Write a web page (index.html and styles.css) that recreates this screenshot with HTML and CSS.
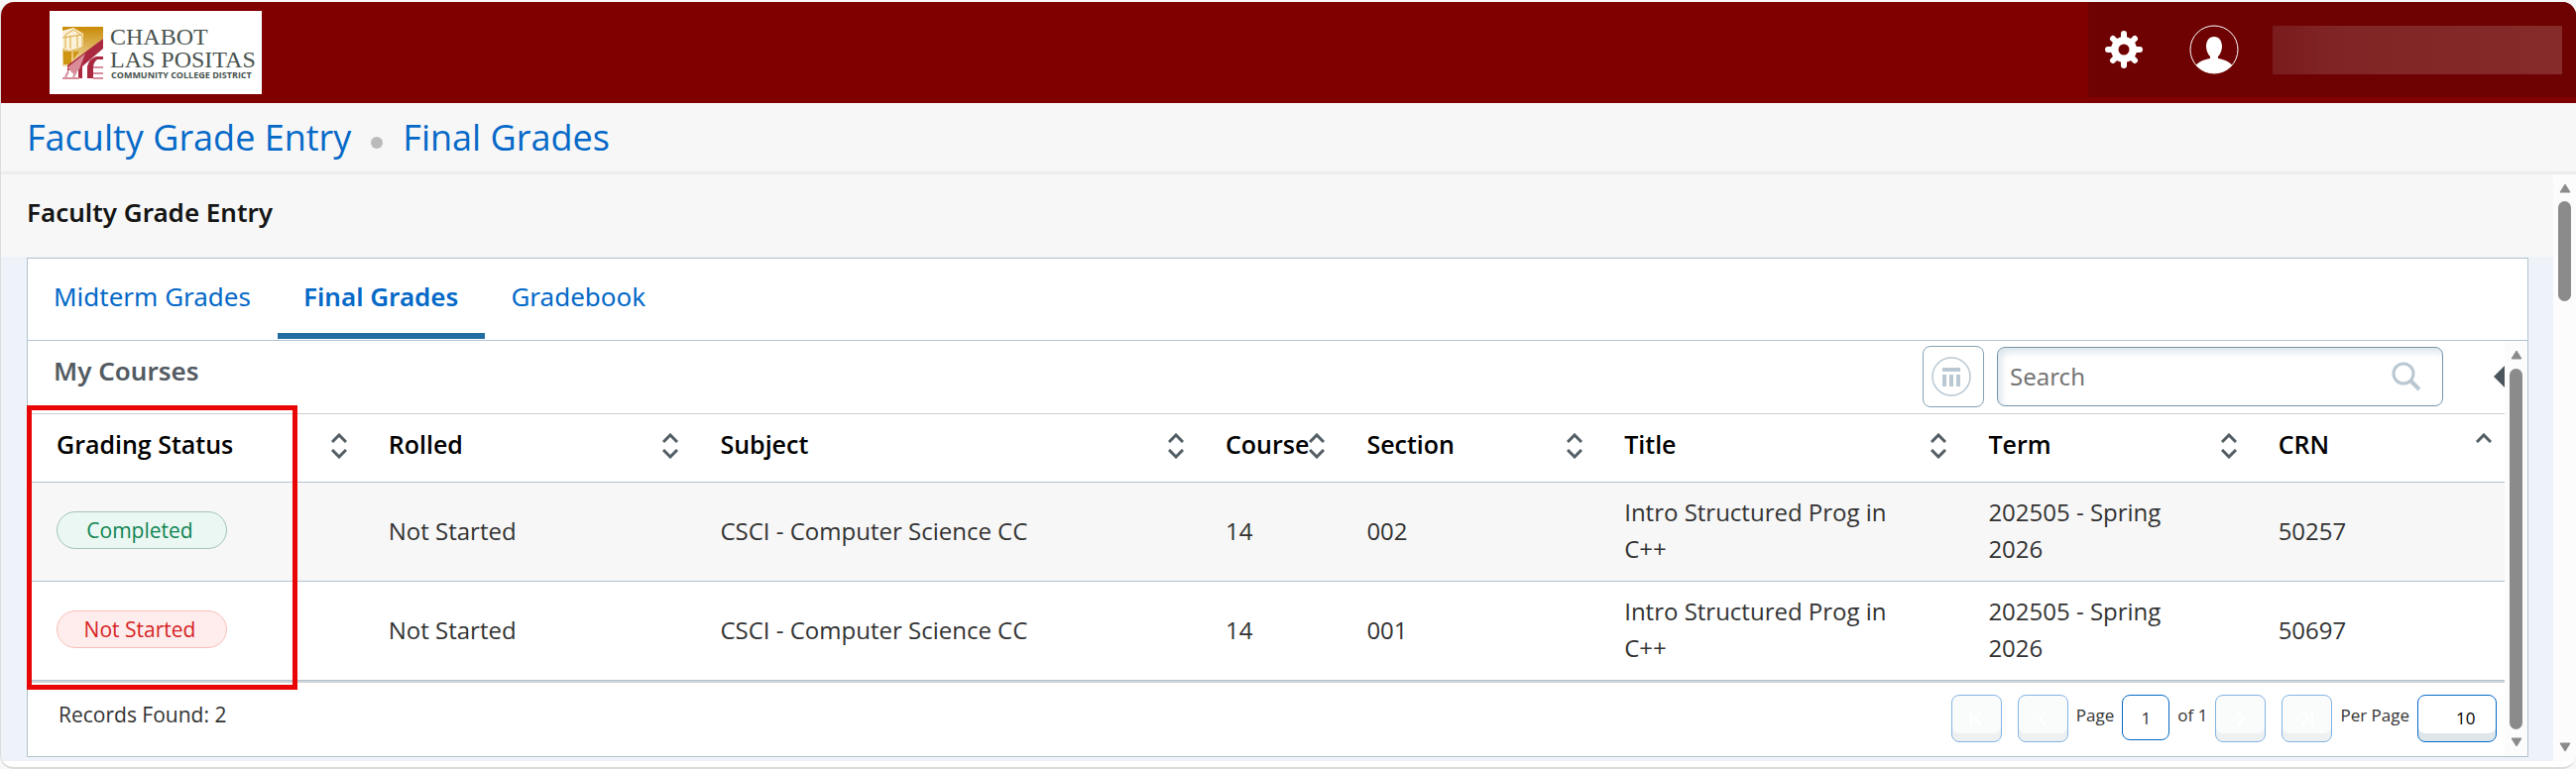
FILE: index.html
```html
<!DOCTYPE html>
<html lang="en">
<head>
  <meta charset="UTF-8">
  <title>Faculty Grade Entry</title>
  <link rel="stylesheet" href="styles.css">
</head>
<body>
  <!-- shared icons -->
  <svg class="sprite" aria-hidden="true">
    <symbol id="up" viewBox="0 0 16 10"><path d="M1 9l7-7 7 7" fill="none" stroke="#535d64" stroke-width="3"/></symbol>
    <symbol id="down" viewBox="0 0 16 10"><path d="M1 1l7 7 7-7" fill="none" stroke="#535d64" stroke-width="3"/></symbol>
    <symbol id="arrow-up" viewBox="0 0 12 10"><path d="M6 1l5 8H1z" fill="#8b8b8b" stroke="#8b8b8b" stroke-linejoin="round"/></symbol>
    <symbol id="arrow-down" viewBox="0 0 12 10"><path d="M6 9L1 1h10z" fill="#8b8b8b" stroke="#8b8b8b" stroke-linejoin="round"/></symbol>
  </svg>

  <div class="window">
    <header class="topbar">
      <a href="#" class="logo" aria-label="Chabot Las Positas Community College District">
        <svg viewBox="0 0 214 84" width="214" height="84">
          <defs>
            <linearGradient id="gold" x1="0" y1="0" x2="0" y2="1">
              <stop offset="0" stop-color="#c98a06"/>
              <stop offset="1" stop-color="#f3dfae"/>
            </linearGradient>
          </defs>
          <path d="M13 16h41v12L20 56h-7z" fill="url(#gold)"/>
          <path d="M13 20l11-3 10 6v13l-14 4-7-2z" fill="#fbf1d8"/>
          <path d="M16 38V24l8-5 9 6v12M21 38V25M28 37V24M13 27l20-3" fill="none" stroke="#dba93c"/>
          <path d="M14 41h8v13h-8zM24 41h6l-6 8z" fill="#cf9412"/>
          <path d="M54 28v10L33 56v12h-4V53l-11 8v-6z" fill="#aa2940"/>
          <path d="M18 57l18-14-6 16-6 5z" fill="#d98d98"/>
          <path d="M38 68V56q2-8 9-10h7v3h-6q-4 3-4 9v10z" fill="#aa2940"/>
          <path d="M13 68h17M16 67l3-6M24 67l3-6M44 57h10M44 63h10M44 68h10" fill="none" stroke="#d68f9b" stroke-width="2"/>
          <text x="61" y="34" class="logo-name">CHABOT</text>
          <text x="61" y="57" class="logo-name">LAS POSITAS</text>
          <text x="62" y="68" class="logo-sub">COMMUNITY COLLEGE DISTRICT</text>
        </svg>
      </a>
      <div class="user-tools">
        <button class="icon-btn" aria-label="Settings">
          <svg viewBox="0 0 38 38" width="38" height="38">
            <g stroke="#fff" stroke-width="6" stroke-linecap="round">
              <path d="M19 3v32M3 19h32M8 8l22 22M30 8L8 30"/>
            </g>
            <circle cx="19" cy="19" r="13" fill="#fff"/>
            <circle cx="19" cy="19" r="5.5" fill="#6e0202"/>
          </svg>
        </button>
        <button class="icon-btn" aria-label="Profile">
          <svg viewBox="0 0 50 50" width="50" height="50">
            <clipPath id="face"><circle cx="25" cy="25" r="24"/></clipPath>
            <g clip-path="url(#face)" fill="#fff">
              <path d="M25 12c5 0 8 4 8 10 0 4-2 8-4 10v2c7 1 13 4 16 9v10H5V43c3-5 9-8 16-9v-2c-2-2-4-6-4-10 0-6 3-10 8-10z"/>
            </g>
            <circle cx="25" cy="25" r="24" fill="none" stroke="#fff"/>
          </svg>
        </button>
        <div class="user-name"></div>
      </div>
    </header>

    <nav class="breadcrumb">
      <a href="#">Faculty Grade Entry</a>
      <span class="dot"></span>
      <a href="#">Final Grades</a>
    </nav>

    <div class="page">
      <main class="content">
        <h1>Faculty Grade Entry</h1>
        <section class="panel">
          <nav class="tabs">
            <a href="#">Midterm Grades</a>
            <a href="#" class="active">Final Grades</a>
            <a href="#">Gradebook</a>
          </nav>
          <div class="panel-body">
            <div class="courses">
              <div class="toolbar">
                <h2>My Courses</h2>
                <button class="columns-btn" aria-label="Choose columns">
                  <svg viewBox="0 0 40 40" width="40" height="40">
                    <circle cx="20" cy="20" r="19" fill="none" stroke="#b9c8d3" stroke-width="1.5"/>
                    <path d="M11 11h18v4H11zM11 18h4v12h-4zM18 18h4v12h-4zM25 18h4v12h-4z" fill="#b9c8d3"/>
                  </svg>
                </button>
                <label class="search">
                  <input type="text" placeholder="Search" aria-label="Search">
                  <svg viewBox="0 0 30 30" width="30" height="30" fill="none" stroke="#b9c8d3">
                    <circle cx="12" cy="12" r="10" stroke-width="3"/>
                    <path d="M19 19l9 9" stroke-width="4"/>
                  </svg>
                </label>
                <button class="collapse" aria-label="Collapse">
                  <svg viewBox="0 0 11 22" width="11" height="22"><path d="M11 0v22L0 11z" fill="#4b555c"/></svg>
                </button>
              </div>

              <div class="grid">
                <table>
                  <colgroup>
                    <col class="c-status"><col class="c-rolled"><col class="c-subject"><col class="c-course">
                    <col class="c-section"><col class="c-title"><col class="c-term"><col class="c-crn">
                  </colgroup>
                  <thead>
                    <tr>
                      <th><div class="th">Grading Status <span class="sort"><svg><use href="#up"/></svg><svg><use href="#down"/></svg></span></div></th>
                      <th><div class="th">Rolled <span class="sort"><svg><use href="#up"/></svg><svg><use href="#down"/></svg></span></div></th>
                      <th><div class="th">Subject <span class="sort"><svg><use href="#up"/></svg><svg><use href="#down"/></svg></span></div></th>
                      <th><div class="th">Course <span class="sort"><svg><use href="#up"/></svg><svg><use href="#down"/></svg></span></div></th>
                      <th><div class="th">Section <span class="sort"><svg><use href="#up"/></svg><svg><use href="#down"/></svg></span></div></th>
                      <th><div class="th">Title <span class="sort"><svg><use href="#up"/></svg><svg><use href="#down"/></svg></span></div></th>
                      <th><div class="th">Term <span class="sort"><svg><use href="#up"/></svg><svg><use href="#down"/></svg></span></div></th>
                      <th><div class="th">CRN <span class="sort"><svg><use href="#up"/></svg></span></div></th>
                    </tr>
                  </thead>
                  <tbody>
                    <tr>
                      <td><span class="status completed">Completed</span></td>
                      <td>Not Started</td>
                      <td>CSCI - Computer Science CC</td>
                      <td>14</td>
                      <td>002</td>
                      <td>Intro Structured Prog in C++</td>
                      <td>202505 - Spring 2026</td>
                      <td>50257</td>
                    </tr>
                    <tr>
                      <td><span class="status not-started">Not Started</span></td>
                      <td>Not Started</td>
                      <td>CSCI - Computer Science CC</td>
                      <td>14</td>
                      <td>001</td>
                      <td>Intro Structured Prog in C++</td>
                      <td>202505 - Spring 2026</td>
                      <td>50697</td>
                    </tr>
                  </tbody>
                </table>
                <div class="highlight"></div>
              </div>

              <div class="footer">
                <div class="records">Records Found: 2</div>
                <div class="pager">
                  <button class="page-btn" disabled aria-label="First page"><svg viewBox="0 0 14 16"><path d="M2 1v14M12 1L6 8l6 7"/></svg></button>
                  <button class="page-btn prev" disabled aria-label="Previous page"><svg viewBox="0 0 14 16"><path d="M10 1L4 8l6 7"/></svg></button>
                  <label for="page-no">Page</label>
                  <input id="page-no" class="page-no" type="text" value="1">
                  <span>of 1</span>
                  <button class="page-btn" disabled aria-label="Next page"><svg viewBox="0 0 14 16"><path d="M4 1l6 7-6 7"/></svg></button>
                  <button class="page-btn last" disabled aria-label="Last page"><svg viewBox="0 0 14 16"><path d="M12 1v14M2 1l6 7-6 7"/></svg></button>
                  <label for="per-page">Per Page</label>
                  <select id="per-page" class="per-page"><option>10</option></select>
                </div>
              </div>
            </div>
            <div class="scrollbar inner">
              <svg><use href="#arrow-up"/></svg>
              <div class="thumb"></div>
              <svg><use href="#arrow-down"/></svg>
            </div>
          </div>
        </section>
      </main>
      <div class="scrollbar outer">
        <svg><use href="#arrow-up"/></svg>
        <div class="thumb"></div>
        <svg><use href="#arrow-down"/></svg>
      </div>
    </div>
  </div>
</body>
</html>
```
FILE: styles.css
```css
* {
  box-sizing: border-box;
  margin: 0;
  padding: 0;
}
body {
  font-family: "Noto Sans", "Open Sans", sans-serif;
  font-size: 24px;
  color: #333;
  background: #f7f7f7;
  padding-top: 2px;
}
a {
  color: #0569c8;
  text-decoration: none;
}
button {
  background: none;
  border: none;
}
svg {
  display: block;
}
.sprite {
  display: none;
}
.window {
  background: #fff;
  border-left: 1px solid #dcdcdc;
  border-bottom: 2px solid #dcdcdc;
  border-radius: 14px;
  padding-bottom: 6px;
  overflow: hidden;
}

/* top bar */
.topbar {
  display: flex;
  align-items: flex-start;
  justify-content: space-between;
  height: 102px;
  background: #800000;
}
.logo {
  margin: 9px 0 0 49px;
  background: #fff;
}
.logo-name {
  font-family: "Liberation Serif", serif;
  font-size: 24px;
  fill: #48524e;
}
.logo-sub {
  font-family: "Open Sans", sans-serif;
  font-size: 9px;
  font-weight: 700;
  fill: #48524e;
}
.user-tools {
  display: flex;
  align-items: center;
  height: 96px;
  padding: 0 14px 0 17px;
  background: #6e0202;
}
.icon-btn {
  margin-right: 47px;
}
.icon-btn + .icon-btn {
  margin-right: 34px;
}
.user-name {
  width: 292px;
  height: 49px;
  background: linear-gradient(90deg, #7a1b1d, #812425 20%, #862a2a);
}

/* breadcrumb */
.breadcrumb {
  display: flex;
  align-items: center;
  height: 72px;
  padding: 0 26px;
  background: #f7f7f7;
  border-bottom: 3px solid #ededed;
  font-family: "Open Sans", sans-serif;
  font-size: 36px;
}
.dot {
  width: 12px;
  height: 12px;
  margin: 10px 20px 0;
  border-radius: 50%;
  background: #bababa;
}

/* page */
.page {
  display: flex;
}
.content {
  flex: 1;
  background: #edf3f8;
  padding-bottom: 4px;
}
h1 {
  height: 83px;
  padding-left: 26px;
  background: #f7f7f7;
  font-size: 26px;
  font-weight: 600;
  line-height: 76px;
  color: #151515;
}
.panel {
  margin: 1px 25px 0 26px;
  background: #fff;
  border: 1px solid #b2c3d0;
}
.tabs {
  display: flex;
  height: 83px;
  border-bottom: 1px solid #b2c3d0;
  font-size: 26px;
  line-height: 76px;
}
.tabs a {
  height: 81px;
  padding: 0 27px 0 26px;
}
.tabs .active {
  font-weight: 600;
  border-bottom: 6px solid #226ea2;
}
.panel-body {
  display: flex;
}
.courses {
  flex: 1;
}

/* toolbar */
.toolbar {
  display: flex;
  align-items: center;
  height: 73px;
  padding: 0 0 2px 26px;
}
h2 {
  flex: 1;
  padding-bottom: 12px;
  font-size: 26px;
  font-weight: 600;
  color: #535b63;
}
.columns-btn {
  display: flex;
  align-items: center;
  width: 62px;
  height: 62px;
  padding-left: 8px;
  border: 1px solid #86a0b2;
  border-radius: 8px;
}
.search {
  display: flex;
  align-items: center;
  width: 450px;
  height: 60px;
  margin: 0 51px 0 13px;
  padding: 0 21px 0 12px;
  border: 1px solid #7794a8;
  border-radius: 8px;
  box-shadow: inset 4px 5px 6px #dfe8ef;
}
.search input {
  flex: 1;
  min-width: 0;
  border: none;
  outline: none;
  background: none;
  font: inherit;
}
.search input::placeholder {
  color: #757575;
}

/* course table */
.grid {
  position: relative;
  border-bottom: 2px solid #cfd3d6;
}
table {
  width: 100%;
  table-layout: fixed;
  border-collapse: separate;
  border-spacing: 0;
  border-top: 1px solid #cccfd2;
}
.c-status, .c-rolled { width: 13.4%; }
.c-subject { width: 20.4%; }
.c-course { width: 5.7%; }
.c-section { width: 10.4%; }
.c-title { width: 14.7%; }
.c-term { width: 11.7%; }
th, td {
  border-bottom: 1px solid #b2c3d0;
  text-align: left;
}
th {
  height: 69px;
  padding: 0 13px 0 29px;
  color: #000;
  font-family: "Open Sans", sans-serif;
  font-size: 25px;
  font-weight: 600;
}
.th {
  display: flex;
  align-items: center;
  justify-content: space-between;
  height: 60px;
  padding-bottom: 8px;
  white-space: nowrap;
}
.sort {
  height: 22px;
}
.sort svg {
  width: 16px;
  height: 10px;
  margin-bottom: 6px;
}
td {
  height: 100px;
  padding: 11px 54px 14px 29px;
  font-family: "Open Sans", sans-serif;
  line-height: 37px;
}
tbody tr:nth-child(odd) {
  background: #f7f7f7;
}
.status {
  display: block;
  width: 172px;
  height: 38px;
  padding-right: 4px;
  border: 1px solid;
  border-radius: 19px;
  font-size: 21px;
  line-height: 36px;
  text-align: center;
}
.completed {
  color: #108554;
  background: #eaf7f2;
  border-color: #a3c5b8;
}
.not-started {
  color: #d62424;
  background: #ffeded;
  border-color: #f9bfb8;
}
.highlight {
  position: absolute;
  top: -8px;
  bottom: -9px;
  left: -1px;
  width: 273px;
  border: 5px solid #e80606;
}

/* footer */
.footer {
  display: flex;
  justify-content: space-between;
  height: 74px;
  padding: 12px 8px 0 31px;
  font-family: "Open Sans", sans-serif;
  font-size: 21px;
}
.records {
  padding-top: 6px;
}
.pager {
  display: flex;
  align-items: flex-start;
  gap: 8px;
  font-size: 17px;
  line-height: 42px;
}
.page-btn {
  display: flex;
  align-items: center;
  justify-content: center;
  width: 51px;
  height: 48px;
  border: 1px solid #82b4e4;
  border-radius: 8px;
  background: #fafcfc;
  box-shadow: inset 0 -8px #edf1f2;
}
.page-btn svg {
  width: 14px;
  height: 16px;
  fill: none;
  stroke: #fff;
  stroke-width: 2;
}
.prev, .last {
  margin-left: 8px;
}
.page-no, .per-page {
  border: 1px solid #0569c8;
  border-radius: 8px;
  background: #fff;
  font: inherit;
}
.page-no {
  width: 48px;
  height: 46px;
  text-align: center;
  color: #333;
}
.per-page {
  appearance: none;
  width: 80px;
  height: 48px;
  padding-left: 38px;
  color: #000;
  box-shadow: inset 0 -8px #dfe6ea;
}

/* scrollbars */
.scrollbar {
  display: flex;
  flex-direction: column;
  align-items: center;
  width: 23px;
  padding: 9px 0;
  background: #fcfcfc;
}
.scrollbar svg {
  width: 12px;
  height: 10px;
}
.thumb {
  width: 13px;
  border-radius: 7px;
  background: #8b8b8b;
}
.inner .thumb {
  flex: 1;
  margin: 9px 0 8px;
}
.outer .thumb {
  height: 101px;
  margin: 8px 0 auto;
}
```
